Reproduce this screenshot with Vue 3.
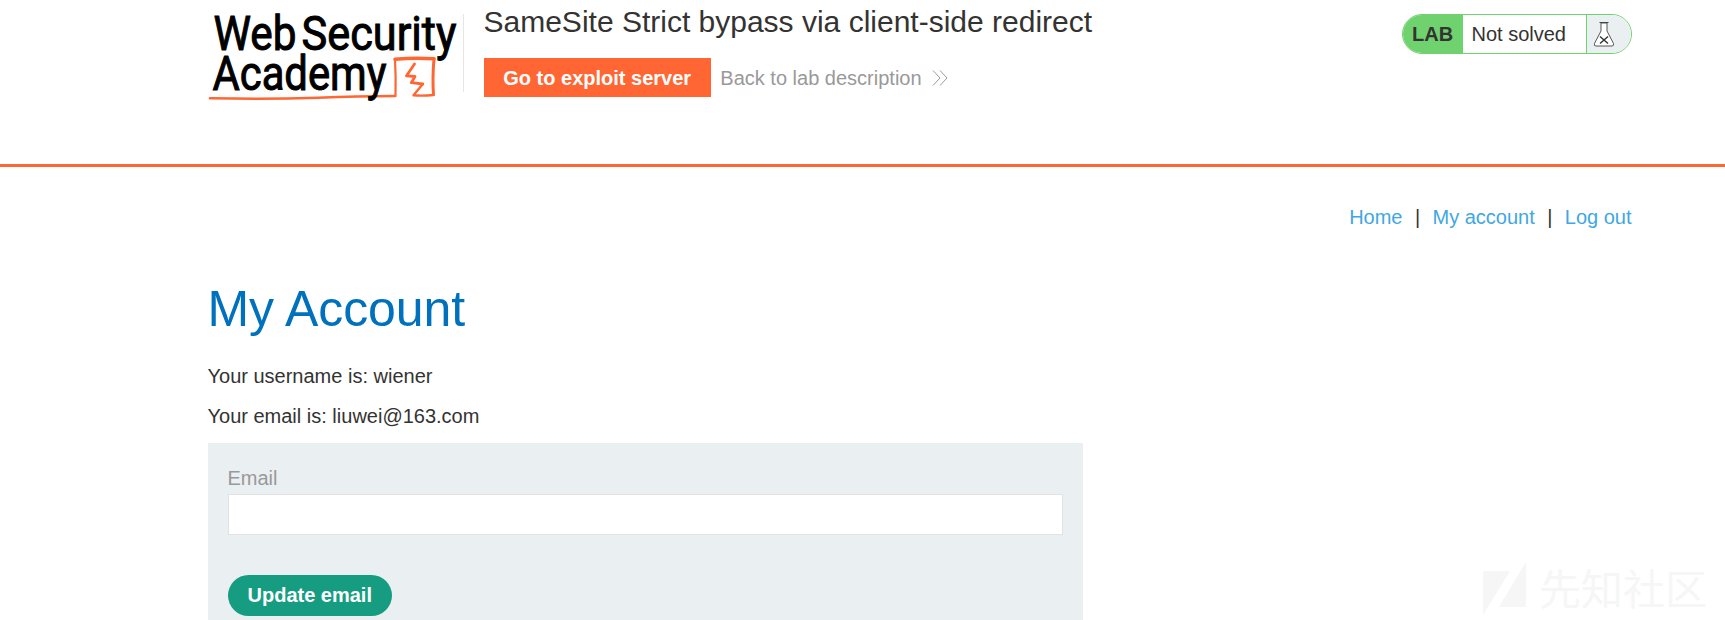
<script setup>
const title = 'SameSite Strict bypass via client-side redirect'
const username = 'wiener'
const email = 'liuwei@163.com'
</script>

<template>
  <div class="page">
    <header class="lab-header">
      <svg class="logo" width="256" height="110" viewBox="0 0 256 110" role="img" aria-label="Web Security Academy">
        <g fill="none" stroke="#ff6633" stroke-linejoin="round" stroke-linecap="round">
          <path d="M2 98.3Q60 99.5 110 97.8Q150 96 187 96" stroke-width="2.6" />
          <path d="M187.500 96Q188 77 187 59.500" stroke-width="2.200" />
          <path d="M187 59.300Q206 57.500 226 58.800" stroke-width="3.400" />
          <path d="M226 59Q224.300 78 225.500 94.500" stroke-width="3" />
          <path d="M225.300 95Q215 96 205.500 95.300L214.800 84" stroke-width="2.400" />
          <path d="M206.500 64L198.500 75.800L207 76.500L203.300 82.700L214.800 84" stroke-width="2.800" />
        </g>
        <g class="logo-text">
          <text x="5.5" y="49.700" textLength="83" lengthAdjust="spacingAndGlyphs">Web</text>
          <text x="93.500" y="49.700" textLength="155" lengthAdjust="spacingAndGlyphs">Security</text>
          <text x="4.500" y="90.200" textLength="174" lengthAdjust="spacingAndGlyphs">Academy</text>
        </g>
      </svg>
      <div class="lab-info">
        <h2>{{ title }}</h2>
        <div class="actions">
          <a class="exploit">Go to exploit server</a>
          <a class="back">Back to lab description
            <svg width="16" height="16" viewBox="0 0 16 16" fill="none" stroke="#999" stroke-width="1">
              <path d="M1 .5L8 8L1 15.500M8 .5L15 8L8 15.500" />
            </svg>
          </a>
        </div>
      </div>
      <div class="status">
        <span class="lab">LAB</span>
        <span class="state">Not solved</span>
        <span class="flask">
          <svg width="22" height="26" viewBox="0 0 22 26" fill="none">
            <path d="M8 2H14V10L20.500 22.500Q21 25 19 25H3Q.5 25 1.500 22.500L8 10Z" fill="#fff" stroke="#444" stroke-width=".9" />
            <path d="M6.500 1.500H15.500" stroke="#444" stroke-width="1.200" />
            <path d="M7 15.500L15 22.500M15 15.500L7 22.500" stroke="#333" stroke-width="1.400" />
          </svg>
        </span>
      </div>
    </header>
    <main>
      <nav>
        <a>Home</a><span>|</span><a>My account</a><span>|</span><a>Log out</a>
      </nav>
      <h1>My Account</h1>
      <p>Your username is: {{ username }}</p>
      <p>Your email is: {{ email }}</p>
      <form @submit.prevent>
        <label for="email">Email</label>
        <input id="email" type="email">
        <button type="submit">Update email</button>
      </form>
    </main>
    <div class="watermark">
      <svg width="44" height="54" viewBox="0 0 44 54" fill="#f6f6f6">
        <path d="M0 9H27L0 53ZM43 0V45H16Z" />
      </svg>
      <span>先知社区</span>
    </div>
  </div>
</template>

<style>
body { margin: 0; overflow: hidden; background: #fff; }
</style>

<style scoped>
* { box-sizing: border-box; }
.page {
  position: relative;
  height: 620px;
  overflow: hidden;
  color: #333332;
  font: 20px/25px "Liberation Sans", Arial, sans-serif;
}
.lab-header {
  display: flex;
  align-items: flex-start;
  height: 167px;
  padding: 0 93px 0 208px;
  border-bottom: 3px solid #ff6633;
}
.logo { flex: none; overflow: visible; }
.logo-text {
  fill: #000;
  stroke: #000;
  stroke-width: 1px;
  font: 400 47.5px Roboto, sans-serif;
}
.lab-info {
  height: 78px;
  margin-top: 14px;
  margin-left: -1px;
  padding-left: 19.5px;
  border-left: 1px solid #e6e6e6;
}
h2 {
  margin: -9px 0 19px;
  font-size: 30px;
  line-height: 34px;
  font-weight: 400;
  white-space: nowrap;
}
.actions { display: flex; align-items: center; }
.exploit {
  height: 39px;
  padding: 0 19.75px;
  background: #ff6633;
  color: #fff;
  font-weight: 700;
  line-height: 40px;
}
.back {
  display: flex;
  align-items: center;
  gap: 10px;
  margin-left: 9.5px;
  padding-top: 1px;
  color: #999;
}
.status {
  display: flex;
  width: 230px;
  height: 40px;
  margin: 14px 0 0 auto;
  overflow: hidden;
  border: 1px solid #70d26e;
  border-radius: 20px;
  line-height: 39px;
}
.lab { width: 60px; padding-left: 9px; background: #70d26e; font-weight: 700; }
.state { width: 123px; padding-left: 8.5px; }
.flask { flex: 1; padding: 6px 0 0 6px; border-left: 1px solid #70d26e; background: #eaeff2; }
.flask svg { display: block; }
main { padding: 38px 93.5px 0 207.5px; }
nav { display: flex; justify-content: flex-end; color: #333332; }
nav a { color: #3fa7e3; }
nav span { width: 30px; text-align: center; }
h1 {
  margin: 50px 0 26px;
  color: #0071bc;
  font-size: 50px;
  line-height: 58px;
  font-weight: 400;
  letter-spacing: -.1px;
}
p { margin: 0 0 15px; }
form {
  display: flex;
  flex-direction: column;
  align-items: flex-start;
  width: 875px;
  height: 200px;
  margin-top: -1px;
  padding: 23px 20px 0;
  background: #eaeff2;
}
label { color: #999; }
input {
  width: 100%;
  height: 41px;
  margin: 3px 0 40px;
  padding: 0 10px;
  border: 1px solid #e2e2e2;
  border-radius: 0;
  background: #fff;
  font: inherit;
}
button {
  height: 41px;
  padding: 0 20px;
  border: 0;
  border-radius: 21px;
  background: #169c80;
  color: #fff;
  font: 700 20px/41px "Liberation Sans", Arial, sans-serif;
}
.watermark {
  position: absolute;
  right: 18px;
  bottom: 4px;
  display: flex;
  align-items: center;
  gap: 12px;
  color: #f6f6f6;
  font: 42px/54px "Noto Sans CJK SC", sans-serif;
}
.watermark span { position: relative; top: -2px; }
</style>
